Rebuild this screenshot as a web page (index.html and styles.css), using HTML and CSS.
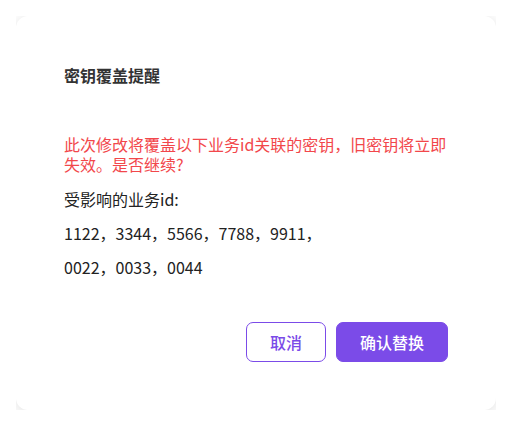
FILE: index.html
```html
<!DOCTYPE html>
<html lang="zh-CN">
<head>
    <meta charset="UTF-8">
    <meta name="viewport" content="width=device-width, initial-scale=1.0">
    <title>密钥覆盖提醒</title>
    <link rel="stylesheet" href="styles.css">
</head>
<body>
    <div class="dialog">
        <div class="dialog-title">密钥覆盖提醒</div>
        <div class="dialog-warning">此次修改将覆盖以下业务id关联的密钥，旧密钥将立即失效。是否继续?</div>
        <div class="dialog-info">
            <div class="info-line">受影响的业务id:</div>
            <div class="info-line">1122，3344，5566，7788，9911，</div>
            <div class="info-line">0022，0033，0044</div>
        </div>
        <div class="dialog-actions">
            <button class="btn btn-cancel">取消</button>
            <button class="btn btn-confirm">确认替换</button>
        </div>
    </div>
</body>
</html>
```

FILE: styles.css
```css
*{
    margin: 0;
    padding: 0;
    box-sizing: border-box;
}

body{
    margin: 16px;
    background-color: #ffffff;
    font-family: "Noto Sans CJK SC", "Noto Sans", sans-serif;
    color: #222222;
}

.dialog{
    width: 480px;
    height: 394px;
    padding: 48px;
    background-color: #ffffff;
    border-radius: 12px;
    box-shadow: 0 2px 14px rgba(0, 0, 0, 0.13);
}

.dialog-title{
    font-size: 16px;
    font-weight: bold;
    line-height: 22px;
    color: #333333;
}

.dialog-warning{
    margin-top: 48px;
    font-size: 16px;
    line-height: 20px;
    color: #f2474b;
}

.dialog-info{
    margin-top: 8px;
    font-size: 16px;
    line-height: 34px;
    color: #222222;
}

.dialog-actions{
    display: flex;
    justify-content: flex-end;
    gap: 10px;
    margin-top: 38px;
}

.btn{
    height: 40px;
    border-radius: 7px;
    font-family: "Noto Sans CJK SC", "Noto Sans", sans-serif;
    font-size: 16px;
    font-weight: 500;
    cursor: pointer;
}

.btn-cancel{
    width: 80px;
    background-color: #ffffff;
    border: 1px solid #7b4be8;
    color: #7b4be8;
}

.btn-confirm{
    width: 112px;
    background-color: #7b4be8;
    border: 1px solid #7b4be8;
    color: #ffffff;
}
```
